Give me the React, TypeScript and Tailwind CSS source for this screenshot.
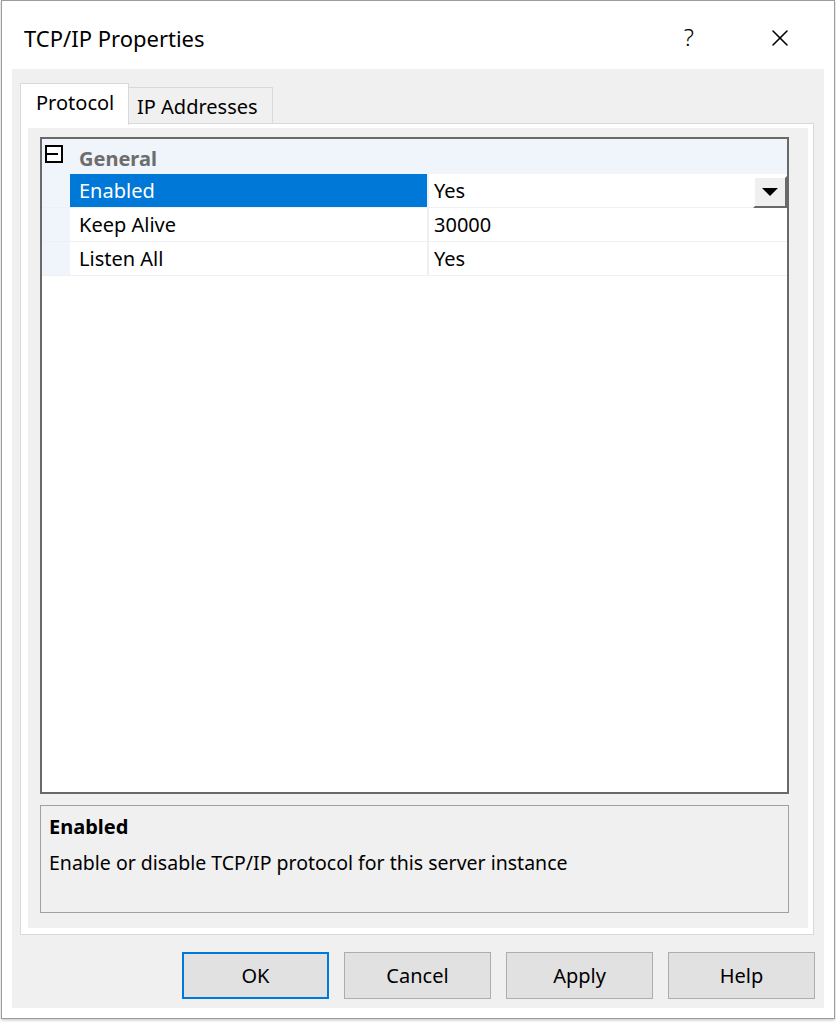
import { X } from "lucide-react";

const font = { fontFamily: '"Noto Sans", "Open Sans", Arial, sans-serif' };

type Row = { name: string; value: string; selected?: boolean };

const rows: Row[] = [
  { name: "Enabled", value: "Yes", selected: true },
  { name: "Keep Alive", value: "30000" },
  { name: "Listen All", value: "Yes" },
];

function MinusBox() {
  return (
    <svg width="18" height="18" viewBox="0 0 18 18" className="block">
      <rect x="1" y="1" width="16" height="16" fill="white" stroke="black" strokeWidth="2" />
      <line x1="2" y1="9" x2="13" y2="9" stroke="black" strokeWidth="2" />
    </svg>
  );
}

function DropButton() {
  return (
    <div className="absolute right-0 top-[2px] flex h-[32px] w-[34px] items-center justify-center border-2 border-t-white border-l-white border-b-[#696969] border-r-[#696969] bg-[#f0f0f0]">
      <svg width="16" height="8" viewBox="0 0 16 8" className="block">
        <polygon points="0,0 16,0 8,8" fill="black" />
      </svg>
    </div>
  );
}

function PropertyRow({ row }: { row: Row }) {
  return (
    <div className="relative flex h-[34px] border-b border-[#eef0f4]">
      <div className="w-[28px] bg-[#f0f4fb]" />
      <div
        className={
          row.selected
            ? "flex w-[357px] items-center bg-[#0078d7] pl-[9px] text-white"
            : "flex w-[357px] items-center pl-[9px] text-black"
        }
      >
        {row.name}
      </div>
      <div className="w-[2px] bg-[#eef0f4]" />
      <div className="flex flex-1 items-center pl-[5px] text-black">{row.value}</div>
      {row.selected && <DropButton />}
    </div>
  );
}

function DialogButton({ label, focused }: { label: string; focused?: boolean }) {
  return (
    <button
      className={
        focused
          ? "h-[47px] w-[147px] border-2 border-[#0078d7] bg-[#e1e1e1] text-[20px] text-black"
          : "h-[47px] w-[147px] border border-[#adadad] bg-[#e1e1e1] text-[20px] text-black"
      }
    >
      {label}
    </button>
  );
}

export default function App() {
  return (
    <div className="h-[1022px] w-[836px] bg-white" style={font}>
      <div className="ml-[1px] flex h-[1019px] w-[834px] flex-col border border-[#9c9c9c] bg-white shadow-[0_1px_3px_rgba(0,0,0,0.25)]">
        {/* title bar */}
        <div className="flex h-[68px] items-center pl-[22px] pr-[40px] pt-[6px]">
          <span className="flex-1 text-[22px] text-black">TCP/IP Properties</span>
          <span className="mr-[72px] pb-[2px] text-[24px] font-light text-black">?</span>
          <X size={28} strokeWidth={1.3} className="text-black" />
        </div>

        {/* dialog body */}
        <div className="mx-[10px] mb-[10px] flex flex-1 flex-col bg-[#f0f0f0] px-[8px] pt-[14px]">
          {/* tabs */}
          <div className="flex h-[40px] items-end text-[20px] text-black">
            <div className="relative z-10 -mb-[2px] flex h-[42px] w-[109px] items-start border-l border-r border-t border-[#d9d9d9] bg-white pl-[15px] pt-[4px]">
              Protocol
            </div>
            <div className="flex h-[36px] w-[144px] items-start border-r border-t border-[#d9d9d9] bg-[#f0f0f0] pl-[8px] pt-[4px]">
              IP Addresses
            </div>
          </div>

          {/* tab panel */}
          <div className="flex h-[812px] w-[794px] flex-col border border-[#d9d9d9] bg-white pb-[6px] pl-[7px] pr-[5px] pt-[4px]">
            <div className="flex flex-1 flex-col bg-[#f0f0f0] pb-[15px] pl-[12px] pr-[19px] pt-[9px]">
              {/* property grid */}
              <div className="flex h-[657px] flex-col border-2 border-[#696969] bg-white text-[20px]">
                <div className="flex h-[35px] items-center bg-[#f0f4fb] pt-[4px]">
                  <div className="flex w-[28px] justify-start pb-[10px] pl-[3px]">
                    <MinusBox />
                  </div>
                  <span className="pl-[9px] font-bold text-[#6d6d6d]">General</span>
                </div>
                {rows.map((row) => (
                  <PropertyRow key={row.name} row={row} />
                ))}
              </div>

              {/* description */}
              <div className="mt-[11px] flex h-[108px] flex-col border border-[#a0a0a0] px-[8px] pt-[6px] text-[20px] text-black">
                <span className="font-bold">Enabled</span>
                <span className="mt-[6px] text-[19.5px]">Enable or disable TCP/IP protocol for this server instance</span>
              </div>
            </div>
          </div>

          {/* buttons */}
          <div className="mt-[17px] flex justify-end gap-[15px] pr-[1px]">
            <DialogButton label="OK" focused />
            <DialogButton label="Cancel" />
            <DialogButton label="Apply" />
            <DialogButton label="Help" />
          </div>
        </div>
      </div>
    </div>
  );
}
